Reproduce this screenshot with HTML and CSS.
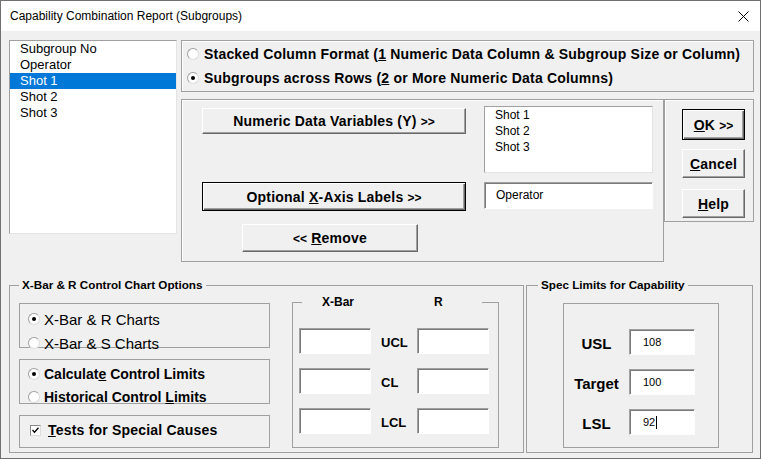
FILE: index.html
```html
<!DOCTYPE html>
<html lang="en">

<head>
    <meta charset="UTF-8">
    <title>Capability Combination Report (Subgroups)</title>
    <link rel="stylesheet" href="styles.css">
</head>

<body>
    <div class="dialog">
        <div class="titlebar">
            <span class="title">Capability Combination Report (Subgroups)</span>
            <svg class="close" viewBox="0 0 11 11">
                <path d="M0.5 0.5 L10.5 10.5 M10.5 0.5 L0.5 10.5" stroke="#000" stroke-width="1" fill="none" />
            </svg>
        </div>

        <div class="content">
            <div class="top">
                <div class="listbox vars">
                    <div class="item">Subgroup No</div>
                    <div class="item">Operator</div>
                    <div class="item selected">Shot 1</div>
                    <div class="item">Shot 2</div>
                    <div class="item">Shot 3</div>
                </div>

                <div class="right">
                    <div class="panel format">
                        <div class="opt"><span class="radio"></span><span>Stacked Column Format (<u>1</u> Numeric Data Column &amp; Subgroup Size or Column)</span></div>
                        <div class="opt"><span class="radio on"></span><span>Subgroups across Rows (<u>2</u> or More Numeric Data Columns)</span></div>
                    </div>

                    <div class="lower">
                        <div class="panel select">
                            <div class="btn-col">
                                <div class="btn numeric"><span>Numeric Data Variables (Y) <span class="chev">&gt;&gt;</span></span></div>
                                <div class="btn default labels"><span>Optional <u>X</u>-Axis Labels <span class="chev">&gt;&gt;</span></span></div>
                                <div class="btn remove"><span><span class="chev">&lt;&lt;</span> <u>R</u>emove</span></div>
                            </div>
                            <div class="box-col">
                                <div class="listbox picked">
                                    <div class="item">Shot 1</div>
                                    <div class="item">Shot 2</div>
                                    <div class="item">Shot 3</div>
                                </div>
                                <div class="field xlabel">Operator</div>
                            </div>
                        </div>

                        <div class="panel actions">
                            <div class="btn default action ok"><span><u>O</u>K <span class="chev">&gt;&gt;</span></span></div>
                            <div class="btn action cancel"><span><u>C</u>ancel</span></div>
                            <div class="btn action help"><span><u>H</u>elp</span></div>
                        </div>
                    </div>
                </div>
            </div>

            <div class="bottom">
                <fieldset class="group chart">
                    <legend>X-Bar &amp; R Control Chart Options</legend>
                    <div class="chart-body">
                        <div class="opts">
                            <div class="subbox sub1">
                                <div class="choice plain"><span class="radio on"></span><span>X-Bar &amp; R Charts</span></div>
                                <div class="choice plain"><span class="radio"></span><span>X-Bar &amp; S Charts</span></div>
                            </div>
                            <div class="subbox sub2">
                                <div class="choice"><span class="radio on"></span><span>Calculat<u>e</u> Control Limits</span></div>
                                <div class="choice"><span class="radio"></span><span>Historical Control <u>L</u>imits</span></div>
                            </div>
                            <div class="subbox sub3">
                                <div class="choice tests">
                                    <span class="check">
                                        <svg viewBox="0 0 9 9">
                                            <path d="M1.5 4 L3.5 6.2 L7.5 1.8" stroke="#000" stroke-width="1.3" fill="none" />
                                        </svg>
                                    </span><span><u>T</u>ests for Special Causes</span>
                                </div>
                            </div>
                        </div>

                        <fieldset class="limits">
                            <legend><span class="xbar">X-Bar</span><span>R</span></legend>
                            <div class="limit-grid">
                                <div class="field"></div>
                                <div class="limit-name">UCL</div>
                                <div class="field"></div>
                                <div class="field"></div>
                                <div class="limit-name">CL</div>
                                <div class="field"></div>
                                <div class="field"></div>
                                <div class="limit-name">LCL</div>
                                <div class="field"></div>
                            </div>
                        </fieldset>
                    </div>
                </fieldset>

                <fieldset class="group spec">
                    <legend>Spec Limits for Capability</legend>
                    <div class="spec-box">
                        <div class="spec-name">USL</div>
                        <div class="field value">108</div>
                        <div class="spec-name">Target</div>
                        <div class="field value">100</div>
                        <div class="spec-name">LSL</div>
                        <div class="field value">92<span class="caret"></span></div>
                    </div>
                </fieldset>
            </div>
        </div>
    </div>
</body>

</html>
```

FILE: styles.css
```css
body {
    margin: 0;
    background: #f0f0f0;
    font-family: "Liberation Sans", Arial, sans-serif;
    color: #000;
}

.dialog {
    width: 761px;
    height: 459px;
    box-sizing: border-box;
    border: 1px solid #707070;
    background: #f0f0f0;
    overflow: hidden;
}

.titlebar {
    height: 30px;
    background: #fff;
    display: flex;
    align-items: center;
    justify-content: space-between;
    padding: 0 11px 0 9px;
}

.title {
    font-size: 12px;
}

.close {
    width: 11px;
    height: 11px;
}

.content {
    padding: 9px 0 0 8px;
}

/* top half */
.top {
    display: flex;
    gap: 4px;
    align-items: flex-start;
}

.listbox {
    background: #fff;
    box-sizing: border-box;
    border: 1px solid;
    border-color: #a0a0a0 #e3e3e3 #e3e3e3 #a0a0a0;
}

.item {
    height: 16px;
    line-height: 16px;
    padding-left: 10px;
    white-space: nowrap;
}

.item.selected {
    background: #0078d7;
    color: #fff;
}

.vars {
    width: 168px;
    height: 194px;
    font-size: 13px;
}

.right {
    width: 573px;
}

.panel {
    box-sizing: border-box;
    border: 1px solid #a0a0a0;
    box-shadow: inset 1px 1px 0 #fff;
}

.format {
    height: 52px;
    padding: 5px 0 0 5px;
    display: flex;
    flex-direction: column;
    gap: 8px;
}

.opt {
    display: flex;
    align-items: center;
    height: 16px;
    gap: 5px;
    font-size: 14px;
    font-weight: bold;
    letter-spacing: 0.2px;
    white-space: nowrap;
}

.radio {
    position: relative;
    flex: none;
    width: 12px;
    height: 12px;
    box-sizing: border-box;
    border-radius: 50%;
    background: #fff;
    border: 1px solid;
    border-color: #a0a0a0 #dcdcdc #dcdcdc #a0a0a0;
}

.radio.on::after {
    content: "";
    position: absolute;
    left: 3px;
    top: 3px;
    width: 4px;
    height: 4px;
    border-radius: 50%;
    background: #000;
}

.lower {
    display: flex;
    margin-top: 7px;
    align-items: flex-start;
}

.select {
    width: 483px;
    height: 163px;
    display: flex;
}

.btn-col {
    width: 264px;
    margin: 8px 0 0 20px;
    display: flex;
    flex-direction: column;
}

.btn {
    box-sizing: border-box;
    display: flex;
    align-items: center;
    justify-content: center;
    background: #f0f0f0;
    border: 1px solid;
    border-color: #fff #696969 #696969 #fff;
    box-shadow: inset -1px -1px 0 #a0a0a0;
    font-size: 14px;
    font-weight: bold;
    letter-spacing: 0.2px;
    white-space: nowrap;
}

.btn.default {
    border-color: #000;
    box-shadow: inset 1px 1px 0 #fff, inset -1px -1px 0 #696969, inset -2px -2px 0 #a0a0a0;
}

.chev {
    font-size: 12px;
    letter-spacing: 0;
}

.numeric {
    height: 26px;
}

.labels {
    height: 29px;
    margin-top: 48px;
}

.remove {
    width: 176px;
    height: 28px;
    margin: 13px 0 0 40px;
}

.box-col {
    width: 169px;
    margin: 6px 0 0 18px;
}

.picked {
    height: 67px;
    font-size: 12px;
}

.field {
    background: #fff;
    box-sizing: border-box;
    border: 1px solid;
    border-color: #a0a0a0 #fff #fff #a0a0a0;
    box-shadow: inset 1px 1px 0 #7a7a7a;
}

.xlabel {
    height: 27px;
    margin-top: 9px;
    padding: 4px 0 0 11px;
    font-size: 12px;
    line-height: 16px;
}

.actions {
    width: 90px;
    height: 123px;
    padding: 9px 0 0 17px;
    display: flex;
    flex-direction: column;
}

.action {
    width: 63px;
    height: 29px;
}

.ok {
    height: 31px;
}

.cancel {
    margin-top: 9px;
}

.help {
    margin-top: 11px;
}

/* bottom half */
.bottom {
    display: flex;
    gap: 2px;
    margin-top: 16px;
    align-items: flex-start;
}

.group {
    margin: 0;
    padding: 0 0 4px;
    min-width: 0;
    box-sizing: border-box;
    border: 1px solid #a0a0a0;
}

.group legend {
    padding: 0 3px;
    margin-left: 9px;
    font-size: 11.7px;
    font-weight: bold;
    line-height: 14px;
}

.chart {
    width: 515px;
}

.chart-body {
    display: flex;
    align-items: flex-start;
}

.opts {
    width: 251px;
    margin: 11px 0 0 9px;
}

.subbox {
    box-sizing: border-box;
    border: 1px solid #a0a0a0;
}

.sub1 {
    height: 45px;
    padding-top: 7px;
}

.sub2 {
    height: 45px;
    margin-top: 11px;
    padding-top: 6px;
}

.sub3 {
    height: 33px;
    margin-top: 11px;
    padding-top: 6px;
}

.choice {
    display: flex;
    align-items: center;
    height: 16px;
    padding-left: 8px;
    gap: 4px;
    font-size: 14px;
    font-weight: bold;
    white-space: nowrap;
}

.choice + .choice {
    margin-top: 7px;
}

.sub1 .choice + .choice {
    margin-top: 8px;
}

.choice.plain {
    font-size: 15px;
    font-weight: normal;
}

.tests {
    padding-left: 10px;
    gap: 7px;
    letter-spacing: 0.2px;
}

.check {
    flex: none;
    width: 11px;
    height: 11px;
    box-sizing: border-box;
    background: #fff;
    border: 1px solid;
    border-color: #8a8a8a #dcdcdc #dcdcdc #8a8a8a;
    display: flex;
}

.check svg {
    width: 9px;
    height: 9px;
}

.limits {
    width: 207px;
    margin: 3px 0 0 22px;
    padding: 0 0 13px 6px;
    min-width: 0;
    box-sizing: border-box;
    border: 1px solid #a0a0a0;
}

.limits legend {
    width: 180px;
    box-sizing: border-box;
    margin-left: 3px;
    padding: 0 0 0 20px;
    font-size: 12px;
    font-weight: bold;
    line-height: 14px;
}

.xbar {
    display: inline-block;
    width: 112px;
}

.limit-grid {
    display: grid;
    grid-template-columns: 72px 46px 72px;
    grid-auto-rows: 26px;
    row-gap: 14px;
    padding-top: 19px;
}

.limit-name {
    padding: 4px 0 0 10px;
    font-size: 13px;
    font-weight: bold;
    line-height: 22px;
}

.spec {
    width: 227px;
}

.spec legend {
    margin-left: 11px;
}

.spec-box {
    width: 156px;
    height: 145px;
    margin: 11px 0 0 36px;
    box-sizing: border-box;
    border: 1px solid #a0a0a0;
    padding-top: 25px;
    display: grid;
    grid-template-columns: 65px 66px;
    grid-auto-rows: 26px;
    row-gap: 14px;
}

.spec-name {
    text-align: center;
    padding-top: 4px;
    font-size: 15px;
    font-weight: bold;
    line-height: 22px;
}

.value {
    display: flex;
    align-items: center;
    padding-left: 13px;
    font-size: 11px;
}

.caret {
    width: 1px;
    height: 13px;
    background: #000;
    margin-left: 1px;
}
```
